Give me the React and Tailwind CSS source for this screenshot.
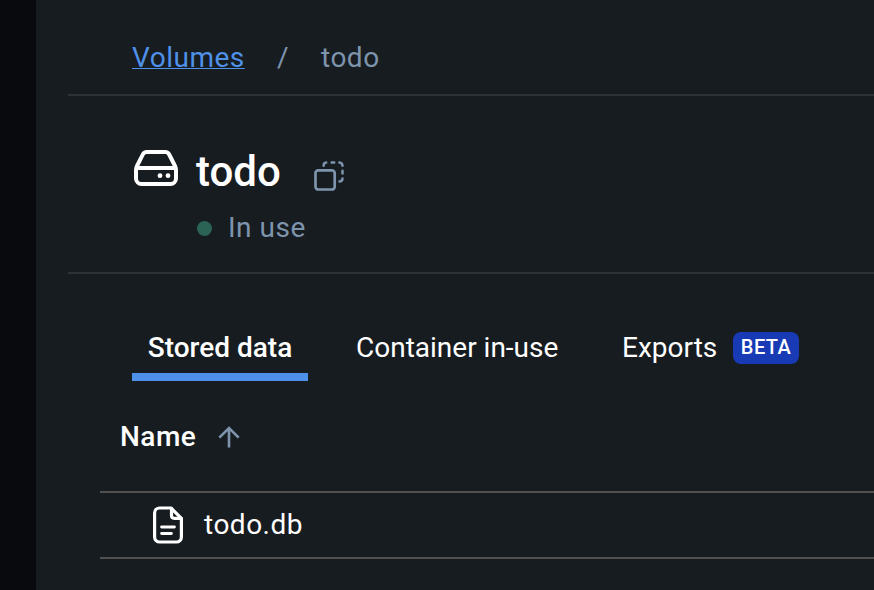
function DriveIcon() {
  return (
    <svg width="44" height="36" viewBox="0 0 44 36" fill="none" stroke="#fff" strokeWidth="4" strokeLinejoin="round">
      <path d="M2 20V28.500A5.500 5.500 0 0 0 7.500 34H36.500A5.500 5.500 0 0 0 42 28.500V20Q42 18 41 16L35.200 4.500Q34 2 31.200 2H12.800Q10 2 8.800 4.500L3 16Q2 18 2 20Z" />
      <path d="M3 18H41" />
      <circle cx="26" cy="25.700" r="2.400" fill="#fff" stroke="none" />
      <circle cx="34" cy="25.700" r="2.400" fill="#fff" stroke="none" />
    </svg>
  );
}

function CopyIcon() {
  return (
    <svg width="30" height="30" viewBox="0 0 30 30" fill="none" stroke="#7e94ad" strokeWidth="2.700">
      <rect x="1.500" y="9.300" width="19.200" height="19.200" rx="2.800" />
      <g strokeLinecap="round" strokeWidth="2.500">
        <path d="M9.600 4.800Q9.600 1.900 12.200 1.600M17.600 1.500H20.200M25.400 1.600Q28.400 1.900 28.500 4.800M28.500 9.800V12.600M28.500 17.600Q28.400 20.200 25.400 20.500" />
      </g>
    </svg>
  );
}

function FileIcon() {
  return (
    <svg width="30" height="38" viewBox="0 0 30 38" fill="none" stroke="#fff" strokeWidth="3.200" strokeLinejoin="round" strokeLinecap="round">
      <path d="M6.600 2H18L28.400 12.400V31A5 5 0 0 1 23.400 36H6.600A5 5 0 0 1 1.600 31V7A5 5 0 0 1 6.600 2Z" />
      <path d="M18.500 2.500V9.500Q18.500 12.300 21.300 12.300H28" />
      <path d="M8.600 21H21.400M8.600 27.500H18.400" strokeWidth="2.900" />
    </svg>
  );
}

function ArrowUpIcon() {
  return (
    <svg width="22" height="22" viewBox="0 0 22 22" fill="none" stroke="#7e94ad" strokeWidth="2.600">
      <path d="M11 21.500V2M1.300 11.700L11 2L20.700 11.700" />
    </svg>
  );
}

export default function App() {
  return (
    <div className="flex h-[590px] w-[874px] overflow-hidden bg-[#171c20] text-[28px] leading-8 whitespace-nowrap text-white [font-family:Roboto,'Liberation_Sans',sans-serif]">
      <aside className="w-9 shrink-0 bg-[#090a0e]" />
      <main className="flex grow flex-col pl-8">
        <nav className="flex h-24 shrink-0 items-start border-b-2 border-[#2d3236] pt-[42px] pl-16 tracking-[0.5px] text-[#7e94ad]">
          <a className="w-[113px] text-[#4f90e8] underline decoration-1 underline-offset-1" href="#volumes">Volumes</a>
          <span className="ml-8 w-3">/</span>
          <span className="ml-8">todo</span>
        </nav>
        <header className="h-[178px] shrink-0 border-b-2 border-[#2d3236] pt-[54px] pl-[66px]">
          <div className="flex h-12 items-start">
            <DriveIcon />
            <h1 className="ml-[18px] w-[84px] text-[42px] leading-[44px] font-medium">todo</h1>
            <div className="mt-[11px] ml-[34px]"><CopyIcon /></div>
          </div>
          <div className="mt-[14px] ml-[62px] flex items-center gap-4 tracking-[0.5px] text-[#7e94ad]">
            <span className="flex size-4 items-center justify-center">
              <span className="size-[15px] rounded-full bg-[#2b6355]" />
            </span>
            In use
          </div>
        </header>
        <div className="flex h-[107px] shrink-0 items-end pl-16">
          <div className="flex h-[50px] w-44 items-start justify-center border-b-8 border-[#4f90e8] pt-px font-medium">Stored data</div>
          <div className="ml-12 h-[50px] w-[202px] pt-px">Container in-use</div>
          <div className="ml-16 flex h-[50px] items-start gap-4 pt-px">
            <span className="w-[95px]">Exports</span>
            <span className="flex h-8 w-[66px] items-center justify-center rounded-lg bg-[#183ab4] pb-0.5 text-xl font-medium tracking-[0.4px]">BETA</span>
          </div>
        </div>
        <section className="pl-8">
          <div className="flex h-28 items-start border-b-2 border-[#505050] pt-10 pl-5">
            <span className="w-[77px] font-medium tracking-[0.5px]">Name</span>
            <div className="mt-[5px] ml-[21px]"><ArrowUpIcon /></div>
          </div>
          <div className="flex h-[66px] items-center gap-[21px] border-b-2 border-[#505050] pl-[53px] tracking-[0.5px]">
            <FileIcon />
            <span>todo.db</span>
          </div>
        </section>
      </main>
    </div>
  );
}
